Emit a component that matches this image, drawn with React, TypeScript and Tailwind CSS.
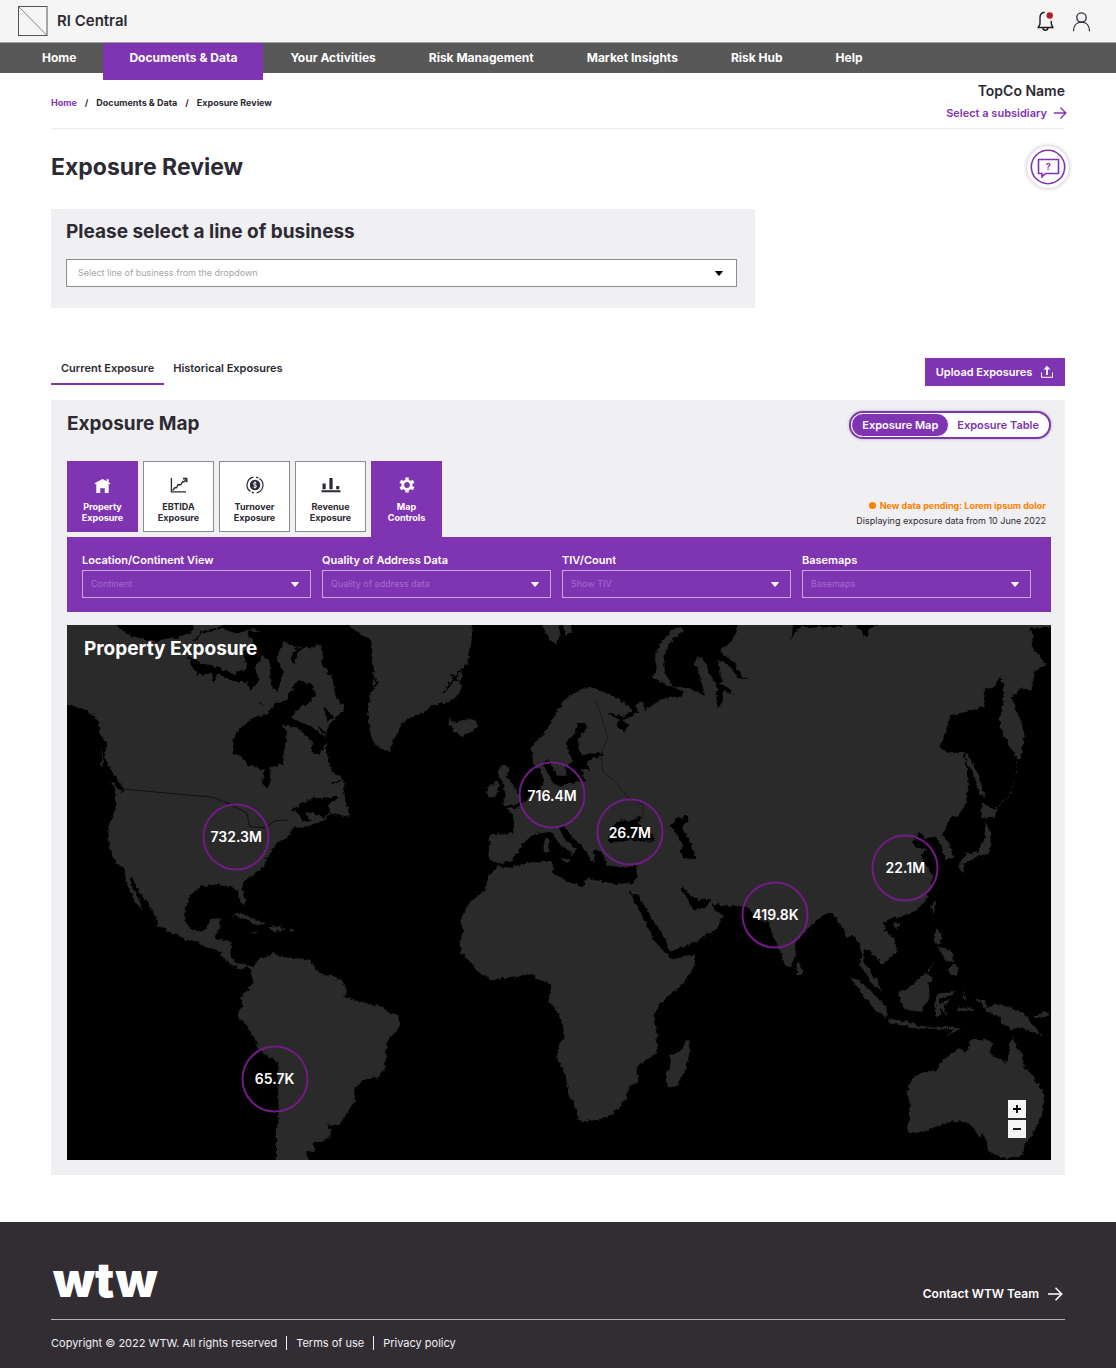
import type { ReactNode } from "react";

const navItems = ["Home", "Documents & Data", "Your Activities", "Risk Management", "Market Insights", "Risk Hub", "Help"];

const filters = [
  { id: "location", label: "Location/Continent View", value: "Continent" },
  { id: "quality", label: "Quality of Address Data", value: "Quality of address data" },
  { id: "tiv", label: "TIV/Count", value: "Show TIV" },
  { id: "basemaps", label: "Basemaps", value: "Basemaps" },
];

// x and y are percentages of the map's width and height
const markers = [
  { label: "732.3M", x: 17.2, y: 39.6 },
  { label: "716.4M", x: 49.3, y: 31.8 },
  { label: "26.7M", x: 57.2, y: 38.7 },
  { label: "22.1M", x: 85.2, y: 45.4 },
  { label: "419.8K", x: 72, y: 54.2 },
  { label: "65.7K", x: 21.1, y: 84.8 },
];

function Arrow({ className }: { className: string }) {
  return (
    <svg viewBox="0 0 16 16" className={className} fill="none" stroke="currentColor" strokeWidth="1.5">
      <path d="M1 8h13.5M8.5 1.8 14.7 8l-6.2 6.2" />
    </svg>
  );
}

function Caret({ className }: { className: string }) {
  return (
    <svg viewBox="0 0 8 5" className={"pointer-events-none absolute top-3 h-[5px] w-2 " + className} fill="currentColor">
      <path d="M.4 0h7.2q.5.2.2.6L4.5 4.500q-.5.4-1 0L.2.6Q-.1.2.4 0Z" />
    </svg>
  );
}

function HouseIcon() {
  return (
    <svg viewBox="0 0 18 16" className="h-[15px] w-[17px]" fill="currentColor">
      <path d="M9 1 .6 5.600l.5 1 1.300-.5V16h4.200v-5.200h4.800V16h4.200V6.100l1.300.5.500-1-1.800-1V1.400h-2.200v2L9 1Z" />
    </svg>
  );
}

function GrowthIcon() {
  return (
    <svg viewBox="0 0 18 16" className="h-4 w-[18px]" fill="none" stroke="currentColor" strokeWidth="1.3">
      <path d="M1.400 1v13.900H16" />
      <path d="M2.600 13.500 5 10.500l1.500.3 1.700-3.300 2.600.2 2-3.200 1.300.2 2-2" />
      <path d="M13 1.700h3.600v3.600" strokeWidth="1.700" />
    </svg>
  );
}

function TurnoverIcon() {
  return (
    <svg viewBox="0 0 18 18" className="h-[18px] w-[18px]" fill="none" stroke="currentColor">
      <circle cx="9" cy="9" r="5.200" fill="currentColor" stroke="none" />
      <path d="M7.400 1.200A8 8 0 0 0 4.500 15.600M10.600 16.800A8 8 0 0 0 13.500 2.400" strokeWidth="1.200" />
      <path d="M10.200 1.200a8 8 0 0 1 2 .6M7.800 16.800a8 8 0 0 1-2-.6" strokeWidth="1.400" />
      <path d="M10.700 7.400Q10.300 6.500 9 6.500T7.400 7.600Q7.400 8.700 9 9t1.600 1.400Q10.600 11.500 9 11.500T7.300 10.600M9 5.400v7.200" stroke="white" strokeWidth=".9" />
    </svg>
  );
}

function BarsIcon() {
  return (
    <svg viewBox="0 0 20 16" className="h-4 w-5" fill="currentColor">
      <path d="M.5 13.200h19v2.100H.5ZM1.500 6.500h3.200v5.800H1.500ZM8.400 1h3.200v11.300H8.400ZM15.200 9h3v3.300h-3Z" />
    </svg>
  );
}

function GearIcon() {
  return (
    <svg viewBox="0 0 16 16" className="h-4 w-4" fill="none" stroke="currentColor">
      <circle cx="8" cy="8" r="4.200" strokeWidth="2.600" />
      <path d="M8 .4v3M8 12.600v3M1.400 4.200 4 5.700M12 10.300l2.600 1.500M1.400 11.800 4 10.300M12 5.700l2.600-1.500" strokeWidth="3.400" />
    </svg>
  );
}

function Tile({ icon, lines, variant }: { icon: ReactNode; lines: [string, string]; variant: "active" | "plain" | "open" }) {
  const styles = {
    active: "h-[71px] bg-[#7f35b2] text-white",
    plain: "h-[71px] bg-white text-[#2d2a33] ring-1 ring-[#8c8b90] ring-inset",
    open: "h-[76px] bg-[#7f35b2] pb-[5px] text-white",
  };
  return (
    <button className={"flex w-[71px] flex-col items-center justify-end text-[9px] leading-[11px] font-bold " + styles[variant]}>
      <span className="mb-[7px] flex h-[18px] items-center">{icon}</span>
      <span>{lines[0]}</span>
      <span className="mb-[9px]">{lines[1]}</span>
    </button>
  );
}

function WorldMap() {
  return (
    <svg viewBox="0 0 2952 1605" className="block h-auto w-full bg-black" role="img" aria-label="World map">
      <filter id="coast" x="0" y="0" width="100%" height="100%" colorInterpolationFilters="sRGB">
        <feTurbulence type="fractalNoise" baseFrequency="0.08" numOctaves="3" seed="4" />
        <feDisplacementMap in="SourceGraphic" scale="15" xChannelSelector="R" yChannelSelector="G" />
      </filter>
      <g filter="url(#coast)">
        <g fill="#2a2a2a">
          {/* North and Central America, South America */}
          <path d="M-40-40H762V45L767 120 797 165 805 210 832 248 805 280 785 300 776 330 778 380 788 420 800 445 825 462 833 480 830 510 845 560 848 575 815 570 790 565 770 585 720 605 680 605 662 635 627 655 607 690 597 700 592 725 557 750 532 770 524 790 538 825 532 840 518 828 512 795 490 784 450 778 400 785 370 808 354 855 355 890 377 917 417 915 429 885 462 880 457 905 444 943 494 950 489 995 517 1020 537 1013 557 1028 577 1000 622 985 637 995 687 1000 727 1005 752 1040 767 1050 797 1053 822 1067 840 1095 832 1115 857 1125 897 1135 947 1145 972 1165 994 1173 998 1200 982 1225 959 1253 957 1295 952 1335 932 1357 902 1360 877 1375 862 1395 865 1425 847 1455 832 1475 817 1500 777 1498 792 1515 790 1535 767 1550 739 1552 742 1580 717 1580 735 1640H627L627 1535 634 1495V1315L607 1295 577 1275 567 1250 542 1205 517 1180 514 1165 527 1140 522 1120 557 1075 552 1035 542 1023 522 1035 487 1015 467 995 452 975 412 965 382 945 362 945 317 925 269 900V880L237 825 212 795 195 755 188 765 212 820 230 862 208 835 178 775 172 730 147 715 132 680 122 640 127 600 147 545V510L132 465 118 430 102 420 102 390V340L92 290 67 260 37 250-40 225Z" />
          {/* Greenland and Iceland */}
          <path d="M847-40V5L912 45 917 100 922 150 912 200 902 260 907 310 917 350 942 370 967 382 985 335 1004 295 1069 260 1099 240 1149 230 1179 205 1184 140 1204 110 1214 50 1219-40Z" />
          <path d="M1147 280 1165 297 1185 285 1219 282 1234 300 1214 320 1184 333 1159 315 1144 300Z" />
          {/* Svalbard and Novaya Zemlya */}
          <path d="M1415-20 1434 20 1449 45 1469 62 1479 25 1474-20ZM1489-20 1494 35 1514 20 1509-20Z" />
          <path d="M1839 5 1814 15 1784 50 1764 90 1769 130 1754 155 1789 175 1819 185 1799 155 1789 120 1794 80 1819 40 1849 15Z" />
          {/* Europe, Asia and Africa */}
          <path d="M1399 420 1394 365 1434 325 1464 270 1489 230 1524 200 1569 185 1609 200 1669 230 1694 255 1674 275 1619 265 1660 285 1649 300 1669 320 1689 300 1669 285 1714 265 1704 240 1729 230 1734 255 1779 225 1809 215 1844 215 1849 200 1815 182 1859 190 1889 200 1914 212 1899 160 1884 110 1894 95 1914 110 1929 150 1949 180 1965 170 1955 110 1960 75 1994 50 2005 20 2025-40H2190L2170 50 2190 10 2205 5 2305 8 2355-10 2400 38 2410 8 2450-10 3000-40V0L2884 10 2899 35 2894 65 2919 95 2937 120 2904 135 2894 195 2864 190 2834 215 2849 260 2864 290 2871 335 2862 400 2849 400 2804 320 2797 285 2809 230 2809 180 2799 155 2779 190 2754 190 2751 245 2699 260 2649 270 2644 300 2619 370 2649 385 2689 380 2699 430 2707 480 2694 540 2674 575 2654 572 2641 600 2626 630 2649 660 2659 695 2634 705 2624 660 2604 635 2569 640 2559 620 2534 650 2549 668 2579 670 2562 690 2574 720 2594 745 2596 765 2589 797 2574 830 2549 855 2504 875 2469 880 2449 895 2454 915 2484 945 2489 980 2449 1020 2429 1000 2394 970 2389 1010 2414 1045 2434 1075 2444 1100 2419 1080 2389 1035 2379 1020 2384 985 2374 950 2359 930 2339 940 2329 915 2299 870 2284 865 2249 885 2224 910 2204 930 2184 955 2187 990 2169 1027 2154 1020 2134 965 2114 925 2106 890 2079 885 2039 845 1959 840 1934 835 1929 822 1894 825 1869 810 1849 785 1841 790 1869 835 1879 855 1914 850 1929 830 1944 855 1967 875 1949 910 1889 950 1809 980 1794 940 1754 880 1709 805 1700 812 1685 795 1719 860 1734 890 1764 950 1799 985 1814 1003 1884 990V1020L1849 1075 1779 1135 1759 1175 1772 1225 1769 1285 1709 1325 1714 1370 1684 1387 1679 1420 1639 1465 1604 1483 1547 1490 1532 1483 1529 1460 1504 1400 1494 1345 1471 1300 1474 1265 1492 1235 1489 1205 1474 1165 1444 1125 1453 1085 1444 1067 1414 1067 1399 1047 1339 1058 1274 1065 1229 1040 1219 1020 1184 985 1177 955 1189 915 1179 885 1209 830 1254 795 1264 755 1294 723 1329 730 1359 720 1399 710 1459 710 1454 745 1509 770 1546 787 1559 760 1584 765 1644 777 1697 775 1709 750 1711 720 1669 728 1619 720 1609 690 1590 672 1579 680 1584 715 1569 700 1549 665 1514 635 1489 600 1474 605 1499 650 1529 672 1509 705 1514 680 1479 660 1454 620 1399 628 1369 655 1354 680 1329 710 1294 715 1264 700 1269 628 1339 625 1341 600 1339 570 1314 548 1349 550 1369 530 1409 500 1429 480 1424 440Z" />
          {/* Britain, Ireland and the Mediterranean islands */}
          <path d="M1314 420 1329 430 1319 455 1344 490 1364 520 1349 540 1304 540 1319 510 1309 480 1294 450 1299 425ZM1259 490 1289 468 1299 480 1291 510 1264 518ZM1433 640h12v42h-12ZM1480 700 1510 703 1503 718Z" />
          {/* Caribbean */}
          <path d="M487 875 517 863 557 880 597 897 567 900 537 880 502 873ZM602 905 637 903 657 915 622 925ZM552 918 572 918 562 925ZM666 915H683V921H666Z" />
          {/* Madagascar */}
          <path d="M1864 1243 1872 1275 1854 1335 1829 1383 1809 1387 1797 1370V1345L1809 1325 1807 1290 1839 1280Z" />
          {/* Sri Lanka, Indonesia and the Philippines */}
          <path d="M2191 1010 2207 1035 2204 1050 2189 1050ZM2349 1055 2374 1065 2419 1105 2459 1150V1177L2424 1155 2389 1110ZM2459 1180 2519 1190 2559 1205 2660 1205 2680 1214 2549 1210 2469 1195ZM2638 1232 2658 1215 2690 1208 2660 1222ZM2494 1100 2524 1090 2574 1045 2599 1055 2584 1075 2589 1110 2564 1160 2509 1150 2499 1125Z" />
          <path d="M2604 1115 2620 1105 2664 1100 2660 1110 2618 1118 2620 1135 2650 1122 2630 1145 2640 1170 2620 1150 2618 1175 2604 1172ZM2609 910 2624 925 2619 960 2604 955 2601 930ZM2639 1035 2669 1015 2674 1045 2659 1053ZM2580 1040 2604 1005 2585 1042ZM2615 965 2650 975 2662 1010 2635 1005Z" />
          <path d="M2480 892 2500 893 2490 912 2480 905ZM2598 830 2608 828 2600 868 2592 850ZM2729 1125 2754 1125 2759 1150 2794 1135 2869 1165 2894 1195 2924 1230 2889 1220 2859 1205 2839 1215 2809 1200 2799 1175 2764 1160ZM2900 1173 2940 1160 2945 1170 2910 1182ZM2690 1090 2698 1130 2690 1125ZM2670 1150H2720L2715 1157H2670Z" />
          {/* Australia */}
          <path d="M2839 1235 2849 1275 2864 1280 2874 1330 2899 1355 2929 1405V1455L2904 1515 2869 1565 2864 1590 2829 1600 2794 1595 2764 1580 2759 1550 2749 1525 2734 1535 2719 1505 2679 1487 2639 1493 2599 1510 2549 1523 2524 1520 2519 1505 2529 1485 2527 1425 2519 1405 2531 1365 2559 1345 2609 1335 2629 1305 2674 1270 2699 1280 2709 1245H2759L2779 1255 2767 1285 2814 1313 2824 1300 2829 1255Z" />
          {/* Japan and Sakhalin */}
          <path d="M2744 530 2769 550 2791 550 2784 575 2744 578ZM2754 590 2771 625 2769 685 2729 695 2699 712 2679 718 2699 685 2734 680 2754 640ZM2674 718 2694 720 2689 748 2677 735ZM2694 375 2709 400 2734 450 2754 515 2739 510 2724 460 2699 410Z" />
        </g>
        <path d="M2850 405 2840 480 2820 515 2790 548" fill="none" stroke="#2a2a2a" strokeWidth="3" strokeDasharray="10 6" />
        <g fill="#000">
          {/* Arctic channels and Hudson Bay */}
          <path d="M140-40 150 5 200 35 260 50 330 38 372 25 395-40ZM455-40 470 10 500 25 560 12 620 28 700 45 770 60V-40Z" />
          <path d="M360 95 400 113 450 125 500 148 540 130 530 80 560 55 540 20 620 15 700 35 760 55 730 70 690 65 650 50 628 100 650 140 632 200 612 180 608 110 585 90 565 130 578 165 550 195 540 172 500 170 450 145 440 180 435 145 390 150Z" />
          <path d="M497 350 517 310 567 275 597 270 625 235 660 225 675 190 695 165 735 178 745 210 720 240 700 245 670 278 735 305 780 345 757 388 730 380 738 350 690 308 645 298 660 325 652 370 648 415 610 430 610 470 603 492 585 475 590 435 545 420 520 392 500 388Z" />
          <path d="M680 120 668 95 690 70 730 62 695 80ZM575 232 600 245 580 238ZM772 245 800 275 780 290ZM750 300 785 330 775 335Z" />
          {/* Gulf of St Lawrence and the Pacific inlets */}
          <path d="M675 558 700 535 740 520 815 515 785 540 790 560 770 578 735 560 715 565 735 590 710 590 690 560Z" />
          <path d="M98 330 118 350 112 400 140 450 165 480 168 505 150 490 125 455 108 425Z" />
          {/* Baltic, Black and Caspian seas */}
          <path d="M1529 295 1559 293 1561 305 1539 335 1534 370 1544 390 1609 382V392L1559 405 1569 435 1544 430 1554 470 1509 475 1479 482 1459 475 1439 440 1430 415 1445 405 1469 450 1499 455 1494 425 1519 410 1504 380 1499 350 1524 325Z" />
          <path d="M1629 620 1649 590 1669 585 1689 592 1709 575H1729L1712 595 1759 630V650L1689 645 1629 655 1624 635ZM1809 600 1839 575 1862 573 1864 590 1844 605 1869 650 1889 702 1849 700 1839 680 1849 660 1824 620Z" />
          {/* Gulf of Ob */}
          <path d="M1949 175 1972 180 2005 212 1985 200 1969 192 1967 230 1950 250ZM1950 75 2000 110 2025 155 2050 162 2015 160 1985 120 1950 100Z" />
        </g>
        <g fill="none" stroke="#000" strokeWidth="5">
          <path d="M900 210 930 175 918 150M1184 130 1155 170 1130 205M1150 150 1175 170M380 50 400 25 470 5M790 475 825 465" />
        </g>
      </g>
      <g fill="none" stroke="#111" strokeWidth="3">
        <path d="M168 492 440 517 490 538 540 565 548 605 595 608 625 587 665 585" />
        <path d="M1585 225 1605 280 1622 340 1602 385 1607 440 1645 470 1680 515 1730 540 1728 570" strokeWidth="2" />
      </g>
    </svg>
  );
}

export default function App() {
  return (
    <div className="min-h-screen bg-white font-[Inter,sans-serif] text-[#2d2a33]">
      <header>
        <div className="flex h-[42px] items-center justify-between bg-[#f5f5f5] pr-6 pl-[18px]">
          <a href="#" className="flex items-center gap-[9px] text-[15px] font-semibold">
            <svg viewBox="0 0 30 30" className="h-[30px] w-[30px]" fill="none" stroke="#55545a">
              <rect x=".5" y=".5" width="28.500" height="29" />
              <path d="M1 1l28 28.500" strokeWidth=".7" />
            </svg>
            RI Central
          </a>
          <div className="flex items-center gap-4">
            <button aria-label="Notifications">
              <svg viewBox="0 0 20 22" className="h-[22px] w-5" fill="none" stroke="#1d1b21" strokeWidth="1.400">
                <path d="M8.700 2.200C5.500 2.400 4 4.700 4 7.500v6c0 1.600-1.300 2.300-1.700 4h14.500c-.4-1.700-1.500-2.400-1.500-4V11M6.800 17.800c.4 3.200 4.800 3.200 5.200 0" />
                <circle cx="13.700" cy="5.500" r="3.200" fill="#b01c24" stroke="none" />
              </svg>
            </button>
            <button aria-label="Account">
              <svg viewBox="0 0 20 22" className="h-[22px] w-5" fill="none" stroke="#2d2a33" strokeWidth="1.300">
                <circle cx="9.500" cy="7.500" r="4.700" />
                <path d="M1.500 21.300c0-5.500 3-9.100 8-9.100s8 3.600 8 9.100" />
              </svg>
            </button>
          </div>
        </div>
        <nav className="flex h-[31px] items-start gap-px border-t border-[#a0a0a0] bg-[#585858] pl-4 text-xs leading-[30px] font-bold text-white">
          {navItems.map((item) => (
            <a key={item} href="#" className={item === "Documents & Data" ? "z-10 h-[37px] bg-[#7f35b2] px-[26px]" : "px-[26px]"}>
              {item}
            </a>
          ))}
        </nav>
      </header>

      <main className="px-[51px]">
        <div className="flex h-14 items-center justify-between border-b border-[#ececec]">
          <div className="flex gap-2 pt-1 text-[9px] font-bold">
            <a href="#" className="text-[#7f35b2]">Home</a>
            <span>/</span>
            <a href="#">Documents &amp; Data</a>
            <span>/</span>
            <span>Exposure Review</span>
          </div>
          <div className="flex flex-col items-end pt-1">
            <p className="text-sm leading-5 font-semibold">TopCo Name</p>
            <a href="#" className="-mr-[2px] flex items-center gap-[6px] text-[11px] leading-6 font-semibold text-[#7f35b2]">
              Select a subsidiary
              <Arrow className="h-[14px] w-[14px]" />
            </a>
          </div>
        </div>

        <div className="flex h-20 items-center justify-between pb-1">
          <h1 className="text-[23px] leading-8 font-bold">Exposure Review</h1>
          <button aria-label="Get help" className="-mr-1 flex h-[42px] w-[42px] items-center justify-center rounded-full bg-white shadow-[0_0_4px_rgba(0,0,0,0.3)]">
            <svg viewBox="0 0 36 36" className="h-9 w-9" fill="none" stroke="#7f35b2">
              <circle cx="18" cy="18" r="16.700" strokeWidth="1.600" />
              <path d="M8.500 10.500h20v14H15.500l-3.500 3.300v-3.300H8.500Z" strokeWidth="1.600" />
              <text x="18.200" y="21" textAnchor="middle" fill="#7f35b2" stroke="none" fontSize="9" fontWeight="700">?</text>
            </svg>
          </button>
        </div>

        <section className="max-w-[704px] bg-[#f0f0f2] pt-[9px] pr-[18px] pb-[21px] pl-[15px]">
          <label htmlFor="lob" className="block text-[19px] leading-7 font-bold">Please select a line of business</label>
          <div className="relative mt-[13px]">
            <select id="lob" className="block h-7 w-full appearance-none border border-[#8c8b90] bg-white px-[11px] text-[9px] text-[#a5a5a8]">
              <option>Select line of business from the dropdown</option>
            </select>
            <Caret className="right-[14px] text-black" />
          </div>
        </section>

        <div className="mt-[50px] flex h-7 justify-between">
          <div className="flex items-start text-[11px] leading-5 font-semibold">
            <button className="border-b-2 border-[#7f35b2] px-[10px] pb-[5px]">Current Exposure</button>
            <button className="px-[9px]">Historical Exposures</button>
          </div>
          <button className="flex w-[140px] items-center justify-center gap-2 bg-[#7f35b2] text-[11px] font-semibold text-white">
            Upload Exposures
            <svg viewBox="0 0 14 14" className="h-[14px] w-[14px]" fill="none" stroke="currentColor">
              <path d="M1.500 7.500v4.800h11V7.500" strokeWidth="1" />
              <path d="M7 10V3.500" strokeWidth="1.800" />
              <path d="M7 .8 3.500 4.600h7Z" fill="currentColor" stroke="none" />
            </svg>
          </button>
        </div>

        <section className="mt-[14px] bg-[#f0f0f2] pr-[14px] pb-[15px] pl-4">
          <div className="flex items-start justify-between pt-[11px]">
            <h2 className="text-[19px] leading-[26px] font-bold">Exposure Map</h2>
            <div className="flex h-7 items-center rounded-full border-2 border-[#7f35b2] bg-white pr-[10px] text-[11px] font-semibold text-[#7f35b2] shadow-[0_0_3px_rgba(0,0,0,0.3)]">
              <button className="h-6 rounded-full border border-white bg-[#7f35b2] px-[10px] text-white">Exposure Map</button>
              <button className="pl-2">Exposure Table</button>
            </div>
          </div>

          <div className="mt-[22px] flex h-[76px] items-start justify-between">
            <div className="flex gap-[5px]">
              <Tile icon={<HouseIcon />} lines={["Property", "Exposure"]} variant="active" />
              <Tile icon={<GrowthIcon />} lines={["EBTIDA", "Exposure"]} variant="plain" />
              <Tile icon={<TurnoverIcon />} lines={["Turnover", "Exposure"]} variant="plain" />
              <Tile icon={<BarsIcon />} lines={["Revenue", "Exposure"]} variant="plain" />
              <Tile icon={<GearIcon />} lines={["Map", "Controls"]} variant="open" />
            </div>
            <div className="self-end pr-[5px] pb-[9px] text-right text-[9px] leading-[15px]">
              <p className="flex items-center justify-end gap-1 font-bold text-[#ff7f00]">
                <span className="h-[7px] w-[7px] rounded-full bg-[#ff7f00]" />
                New data pending: Lorem ipsum dolor
              </p>
              <p>Displaying exposure data from 10 June 2022</p>
            </div>
          </div>

          <div className="grid grid-cols-4 gap-[11px] bg-[#7f35b2] pt-[14px] pr-5 pb-[14px] pl-[15px] text-white">
            {filters.map((f) => (
              <div key={f.id}>
                <label htmlFor={f.id} className="mb-px block text-[11px] leading-[18px] font-semibold">{f.label}</label>
                <div className="relative">
                  <select id={f.id} className="block h-7 w-full appearance-none border border-[#c9a9df] bg-transparent px-2 text-[9px] text-[#a46bce]">
                    <option>{f.value}</option>
                  </select>
                  <Caret className="right-3" />
                </div>
              </div>
            ))}
          </div>

          <div className="relative mt-[13px] overflow-hidden">
            <WorldMap />
            <h3 className="absolute top-[10px] left-[17px] text-[19px] leading-7 font-bold text-white">Property Exposure</h3>
            {markers.map((m) => (
              <button
                key={m.label}
                className="absolute h-[67px] w-[67px] -translate-x-1/2 -translate-y-1/2 rounded-full border-2 border-[#731a88] text-sm font-semibold text-white"
                style={{ left: `${m.x}%`, top: `${m.y}%` }}
              >
                {m.label}
              </button>
            ))}
            <div className="absolute right-[25px] bottom-[22px] flex flex-col gap-[2px] text-black">
              <button aria-label="Zoom in" className="flex h-[18px] w-[18px] items-center justify-center bg-[#f5f5f5]">
                <svg viewBox="0 0 8 8" className="h-2 w-2" stroke="currentColor" strokeWidth="1.800"><path d="M4 0v8M0 4h8" /></svg>
              </button>
              <button aria-label="Zoom out" className="flex h-[18px] w-[18px] items-center justify-center bg-[#f5f5f5]">
                <svg viewBox="0 0 8 8" className="h-2 w-2" stroke="currentColor" strokeWidth="1.800"><path d="M0 4h8" /></svg>
              </button>
            </div>
          </div>
        </section>
      </main>

      <footer className="mt-[47px] bg-[#322d33] px-[51px] pb-[17px] text-white">
        <div className="flex h-[98px] items-end justify-between border-b border-[#b5b3b7]">
          <p className="mb-[14px] pl-[2px] text-5xl leading-[50px] font-black">wtw</p>
          <a href="#" className="mb-[17px] flex items-center gap-2 pr-[2px] text-xs font-semibold">
            Contact WTW Team
            <Arrow className="h-4 w-4" />
          </a>
        </div>
        <div className="flex items-center gap-[9px] pt-[15px] text-[11px] leading-4 text-[#f0f0f2]">
          <span>Copyright © 2022 WTW. All rights reserved</span>
          <span className="h-[14px] w-px bg-[#f0f0f2]" />
          <a href="#">Terms of use</a>
          <span className="h-[14px] w-px bg-[#f0f0f2]" />
          <a href="#">Privacy policy</a>
        </div>
      </footer>
    </div>
  );
}
